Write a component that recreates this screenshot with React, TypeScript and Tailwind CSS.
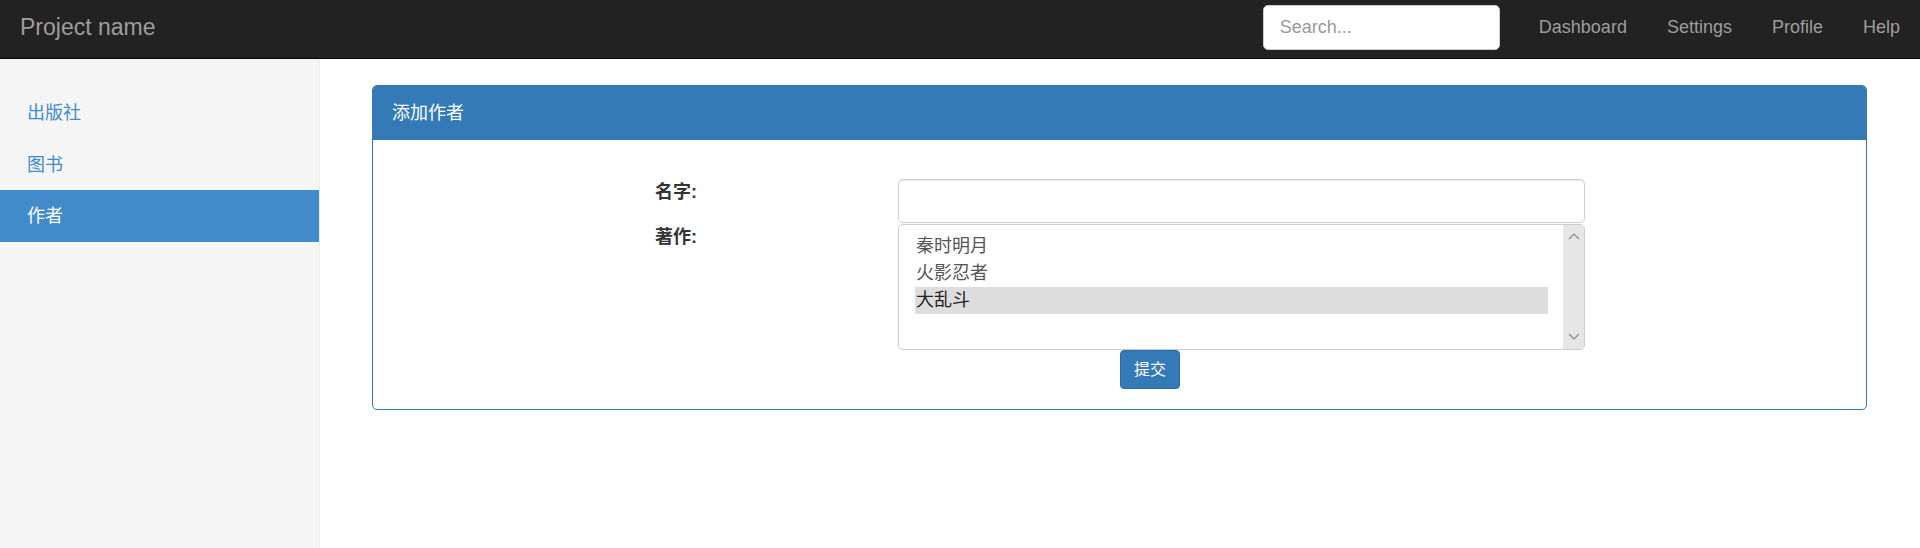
const NAV_LINKS = ["Dashboard", "Settings", "Profile", "Help"];
const SIDEBAR = [
  { label: "出版社", active: false },
  { label: "图书", active: false },
  { label: "作者", active: true },
];
const WORKS = [
  { title: "秦时明月", selected: false },
  { title: "火影忍者", selected: false },
  { title: "大乱斗", selected: true },
];

function Chevron({ up }: { up?: boolean }) {
  return (
    <svg width="12" height="8" viewBox="0 0 12 8" fill="none">
      <polyline
        points={up ? "1,7 6,2 11,7" : "1,1 6,6 11,1"}
        stroke="#8a8a8a"
        strokeWidth="1.2"
      />
    </svg>
  );
}

export default function App() {
  return (
    <div className="h-screen flex flex-col bg-white font-['Liberation_Sans','Noto_Sans_CJK_SC',sans-serif] text-[#333]">
      {/* Navbar */}
      <div className="h-[59px] shrink-0 bg-[#222] border-b border-[#080808]">
        <div className="h-[54px] flex items-center">
          <span className="pl-[20px] text-[23px] text-[#9d9d9d] leading-none">Project name</span>
          <div className="ml-auto flex items-center">
            <div className="w-[237px] h-[45px] bg-white rounded-[5px] border border-[#ccc] flex items-center pl-[16px] text-[18px] text-[#999]">
              Search...
            </div>
            <div className="flex items-center gap-[40px] ml-[39px] pr-[20px]">
              {NAV_LINKS.map((link) => (
                <span key={link} className="text-[18px] text-[#9d9d9d]">
                  {link}
                </span>
              ))}
            </div>
          </div>
        </div>
      </div>

      <div className="flex flex-1 min-h-0">
        {/* Sidebar */}
        <div className="w-[320px] shrink-0 bg-[#f5f5f5] border-r border-[#eee] pt-[28px]">
          {SIDEBAR.map((item) => (
            <div
              key={item.label}
              className={`h-[51.5px] flex items-center pl-[27px] pt-[2px] text-[18px] ${
                item.active ? "bg-[#428bca] text-white" : "text-[#428bca]"
              }`}
            >
              {item.label}
            </div>
          ))}
        </div>

        {/* Main */}
        <div className="flex-1 pt-[26px] pl-[52px] pr-[53px]">
          <div className="border border-[#337ab7] rounded-[5px] overflow-hidden">
            <div className="h-[54px] bg-[#337ab7] flex items-center px-[19px] text-[18px] text-white">
              添加作者
            </div>

            <div className="pt-[39px] pb-[20px]">
              {/* Name */}
              <div className="flex items-start pl-[282px]">
                <label className="w-[243px] text-[18px] font-bold leading-[26px]">名字:</label>
                <div className="w-[687px] h-[44px] rounded-[5px] border border-[#ccc] shadow-[inset_0_1px_1px_rgba(0,0,0,0.075)]" />
              </div>

              {/* Works */}
              <div className="flex items-start pl-[282px] mt-[1px]">
                <label className="w-[243px] text-[18px] font-bold leading-[26px]">著作:</label>
                <div className="w-[687px] h-[126px] rounded-[5px] border border-[#ccc] flex overflow-hidden">
                  <div className="flex-1 pl-[16px] pr-[15px] pt-[8px]">
                    {WORKS.map((w) => (
                      <div
                        key={w.title}
                        className={`h-[27px] flex items-center pl-[1px] text-[18px] ${
                          w.selected ? "bg-[#ddd] text-[#222]" : "text-[#555]"
                        }`}
                      >
                        {w.title}
                      </div>
                    ))}
                  </div>
                  <div className="w-[21px] bg-[#e6e6e6] flex flex-col items-center justify-between pt-[7px] pb-[8px]">
                    <Chevron up />
                    <Chevron />
                  </div>
                </div>
              </div>

              {/* Submit */}
              <div className="flex pl-[747px]">
                <button className="block w-[60px] h-[39px] bg-[#337ab7] border border-[#2e6da4] rounded-[4px] text-white text-[16px]">
                  提交
                </button>
              </div>
            </div>
          </div>
        </div>
      </div>
    </div>
  );
}
